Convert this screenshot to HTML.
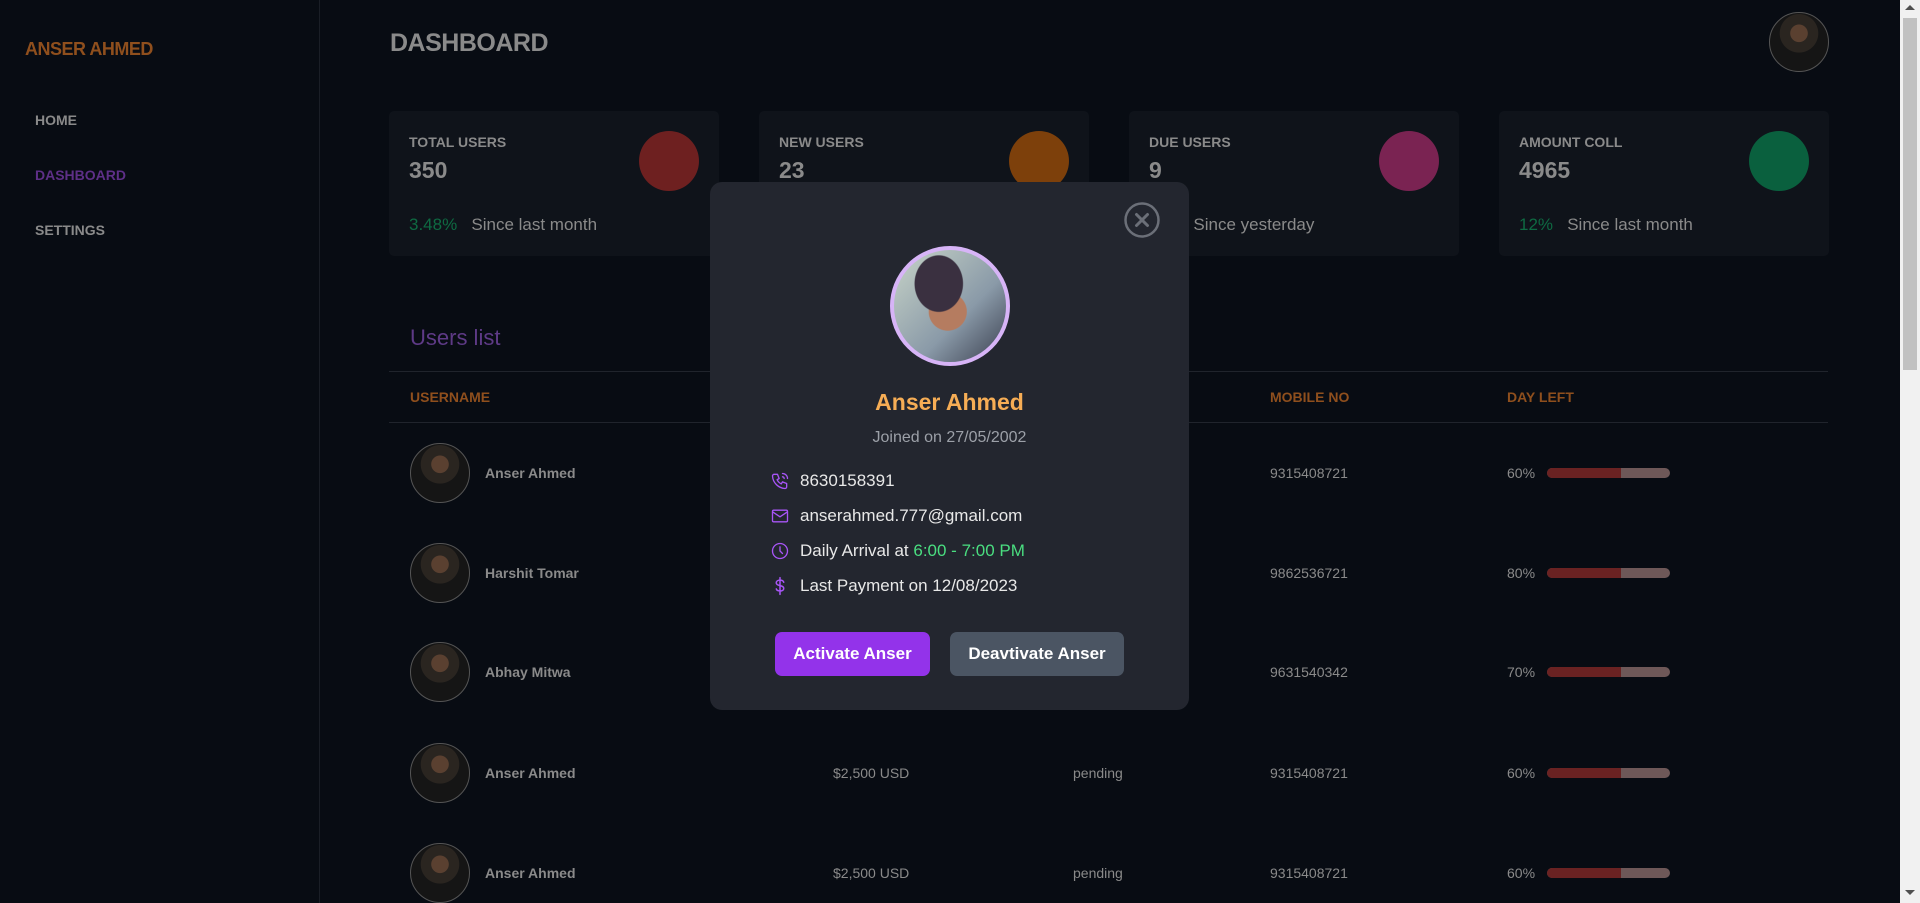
<!DOCTYPE html>
<html><head><meta charset="utf-8"><style>
*{box-sizing:border-box;margin:0;padding:0}
body{width:1920px;height:903px;overflow:hidden;background:#080c13;font-family:"Liberation Sans",sans-serif;position:relative}
.abs{position:absolute;white-space:nowrap}
.side{left:0;top:0;width:320px;height:903px;border-right:1px solid #1a1e26}
.brand{left:25px;top:39px;color:#8f4f1d;font-weight:bold;font-size:18px;letter-spacing:-0.5px}
.nav{left:35px;font-weight:bold;font-size:14px;color:#8a8a8a}
.title{left:390px;top:29px;color:#8a8a8a;font-size:25px;font-weight:bold;letter-spacing:-0.5px}
.card{top:111px;width:330px;height:145px;background:#0f131a;border-radius:5px}
.card .t{position:absolute;left:20px;top:23px;font-size:14px;font-weight:bold;color:#8a8a8a}
.card .v{position:absolute;left:20px;top:46px;font-size:23px;font-weight:bold;color:#8a8a8a}
.card .b{position:absolute;left:20px;top:104px;font-size:17px;color:#8a8a8a}
.card .c{position:absolute;right:20px;top:20px;width:60px;height:60px;border-radius:50%}
.hdr{top:389px;font-size:14px;font-weight:bold;color:#8f4f1d}
.line{left:389px;width:1439px;height:1px;background:#20242c}
.av{width:60px;height:60px;border-radius:50%;border:1px solid #555;background:radial-gradient(circle at 50% 35%,#5a4030 0 18%,#2a2520 19% 40%,#151515 41%),#222;overflow:hidden}
.nm{font-size:14px;font-weight:bold;color:#8a8a8a}
.cell{font-size:14px;color:#8a8a8a}
.bar{width:123px;height:10px;border-radius:5px;background:#6e5858;overflow:hidden}
.bar i{display:block;width:60%;height:100%;background:#6a2222}
.modal{left:710px;top:182px;width:479px;height:528px;background:#23262f;border-radius:12px}
.info{left:60px;font-size:17px;color:#e8e8e8;display:flex;align-items:center}
.info svg{width:20px;height:20px;margin-right:10px}
.btn{top:450px;height:44px;border-radius:7px;color:#fff;font-weight:bold;font-size:17px;display:flex;align-items:center;justify-content:center}
</style></head><body>
<div class="abs side"></div>
<div class="abs brand">ANSER AHMED</div>
<div class="abs nav" style="top:112px">HOME</div>
<div class="abs nav" style="top:167px;color:#5e2f87">DASHBOARD</div>
<div class="abs nav" style="top:222px">SETTINGS</div>
<div class="abs title">DASHBOARD</div>
<div class="abs av" style="left:1769px;top:12px;width:60px;height:60px"></div>

<div class="abs card" style="left:389px"><div class="t">TOTAL USERS</div><div class="v">350</div><div class="b"><span style="color:#0e6a42">3.48%</span>&nbsp;&nbsp; Since last month</div><div class="c" style="background:#6e2020"></div></div>
<div class="abs card" style="left:759px"><div class="t">NEW USERS</div><div class="v">23</div><div class="b"><span style="color:#8a4a0a">12%</span>&nbsp;&nbsp; Since last month</div><div class="c" style="background:#7d400b"></div></div>
<div class="abs card" style="left:1129px"><div class="t">DUE USERS</div><div class="v">9</div><div class="b"><span style="color:#8a4a0a">-4%</span>&nbsp;&nbsp; Since yesterday</div><div class="c" style="background:#7a2352"></div></div>
<div class="abs card" style="left:1499px"><div class="t">AMOUNT COLL</div><div class="v">4965</div><div class="b"><span style="color:#0e6a42">12%</span>&nbsp;&nbsp; Since last month</div><div class="c" style="background:#0a603e"></div></div>

<div class="abs" style="left:410px;top:325px;font-size:22px;color:#5e3a86">Users list</div>
<div class="abs line" style="top:371px"></div>
<div class="abs hdr" style="left:410px">USERNAME</div>
<div class="abs hdr" style="left:833px">AMOUNT</div>
<div class="abs hdr" style="left:1065px">STATUS</div>
<div class="abs hdr" style="left:1270px">MOBILE NO</div>
<div class="abs hdr" style="left:1507px">DAY LEFT</div>
<div class="abs line" style="top:422px"></div>

<div class="abs" style="left:0;top:0">
<div class="abs av" style="left:410px;top:443px"></div><div class="abs nm" style="left:485px;top:465px">Anser Ahmed</div><div class="abs cell" style="left:833px;top:465px">$2,500 USD</div><div class="abs cell" style="left:1073px;top:465px">pending</div><div class="abs cell" style="left:1270px;top:465px">9315408721</div><div class="abs cell" style="left:1507px;top:465px">60%</div><div class="abs bar" style="left:1547px;top:468px"><i></i></div>
<div class="abs av" style="left:410px;top:543px"></div><div class="abs nm" style="left:485px;top:565px">Harshit Tomar</div><div class="abs cell" style="left:833px;top:565px">$2,500 USD</div><div class="abs cell" style="left:1073px;top:565px">pending</div><div class="abs cell" style="left:1270px;top:565px">9862536721</div><div class="abs cell" style="left:1507px;top:565px">80%</div><div class="abs bar" style="left:1547px;top:568px"><i></i></div>
<div class="abs av" style="left:410px;top:642px"></div><div class="abs nm" style="left:485px;top:664px">Abhay Mitwa</div><div class="abs cell" style="left:833px;top:664px">$2,500 USD</div><div class="abs cell" style="left:1073px;top:664px">pending</div><div class="abs cell" style="left:1270px;top:664px">9631540342</div><div class="abs cell" style="left:1507px;top:664px">70%</div><div class="abs bar" style="left:1547px;top:667px"><i></i></div>
<div class="abs av" style="left:410px;top:743px"></div><div class="abs nm" style="left:485px;top:765px">Anser Ahmed</div><div class="abs cell" style="left:833px;top:765px">$2,500 USD</div><div class="abs cell" style="left:1073px;top:765px">pending</div><div class="abs cell" style="left:1270px;top:765px">9315408721</div><div class="abs cell" style="left:1507px;top:765px">60%</div><div class="abs bar" style="left:1547px;top:768px"><i></i></div>
<div class="abs av" style="left:410px;top:843px"></div><div class="abs nm" style="left:485px;top:865px">Anser Ahmed</div><div class="abs cell" style="left:833px;top:865px">$2,500 USD</div><div class="abs cell" style="left:1073px;top:865px">pending</div><div class="abs cell" style="left:1270px;top:865px">9315408721</div><div class="abs cell" style="left:1507px;top:865px">60%</div><div class="abs bar" style="left:1547px;top:868px"><i></i></div>
</div>

<div class="abs modal">
  <svg class="abs" style="left:413px;top:19px" width="38" height="38" viewBox="0 0 38 38"><circle cx="19" cy="19" r="16.5" fill="none" stroke="#6b6f78" stroke-width="2.5"/><path d="M13.5 13.5L24.5 24.5M24.5 13.5L13.5 24.5" stroke="#6b6f78" stroke-width="3" stroke-linecap="round"/></svg>
  <div class="abs" style="left:180px;top:64px;width:120px;height:120px;border-radius:50%;border:4px solid #d7b4f7;background:radial-gradient(ellipse at 40% 30%,#3a3040 0 25%,transparent 26%),radial-gradient(circle at 48% 55%,#b57c60 0 22%,transparent 23%),linear-gradient(135deg,#c8d4c8,#8a9aa8 60%,#3a4050)"></div>
  <div class="abs" style="left:0;width:479px;top:207px;text-align:center;font-size:23px;font-weight:bold;color:#f6ad55">Anser Ahmed</div>
  <div class="abs" style="left:0;width:479px;top:247px;text-align:center;font-size:16px;color:#9ca0a8">Joined on 27/05/2002</div>
  <div class="abs info" style="top:289px"><svg viewBox="0 0 24 24" fill="none" stroke="#a855f7" stroke-width="1.6" stroke-linecap="round" stroke-linejoin="round"><path d="M5 4h4l2 5-2.5 1.5a11 11 0 005 5L15 13l5 2v4a2 2 0 01-2 2A16 16 0 013 6a2 2 0 012-2"/><path d="M15 3a6 6 0 016 6M15 7a2 2 0 012 2"/></svg>8630158391</div>
  <div class="abs info" style="top:324px"><svg viewBox="0 0 24 24" fill="none" stroke="#a855f7" stroke-width="1.6" stroke-linejoin="round"><rect x="3" y="5" width="18" height="14" rx="1.5"/><path d="M3 7l9 6 9-6"/></svg>anserahmed.777@gmail.com</div>
  <div class="abs info" style="top:359px"><svg viewBox="0 0 24 24" fill="none" stroke="#a855f7" stroke-width="1.6" stroke-linecap="round"><circle cx="12" cy="12" r="9"/><path d="M12 7v5l3 3"/></svg>Daily Arrival at&nbsp;<span style="color:#4ade80">6:00 - 7:00 PM</span></div>
  <div class="abs info" style="top:394px"><svg viewBox="0 0 24 24" fill="none" stroke="#a855f7" stroke-width="1.8" stroke-linecap="round"><path d="M16.5 7.5c-.5-1.5-2.2-2.5-4.5-2.5-2.5 0-4.5 1.3-4.5 3.3s2 2.7 4.5 3.2 4.5 1.2 4.5 3.3-2 3.2-4.5 3.2c-2.3 0-4-1-4.5-2.5M12 2v20"/></svg>Last Payment on 12/08/2023</div>
  <div class="abs btn" style="left:65px;width:155px;background:#9333ea">Activate Anser</div>
  <div class="abs btn" style="left:240px;width:174px;background:#4b5563">Deavtivate Anser</div>
</div>

<div class="abs" style="left:1900px;top:0;width:20px;height:903px;background:#f1f1f1"></div>
<div class="abs" style="left:1903px;top:18px;width:14px;height:352px;background:#c1c1c1"></div>
<div class="abs" style="left:1905px;top:5px;width:0;height:0;border-left:5px solid transparent;border-right:5px solid transparent;border-bottom:5px solid #505050"></div>
<div class="abs" style="left:1905px;top:890px;width:0;height:0;border-left:5px solid transparent;border-right:5px solid transparent;border-top:5px solid #505050"></div>
</body></html>
